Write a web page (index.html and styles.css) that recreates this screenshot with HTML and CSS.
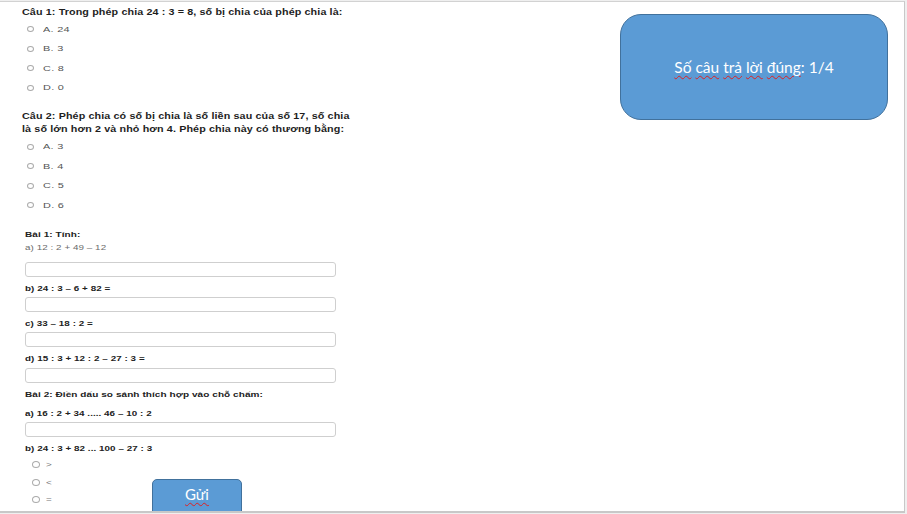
FILE: index.html
```html
<!DOCTYPE html>
<html lang="vi">
<head>
<meta charset="utf-8">
<title>Bài kiểm tra</title>
<link rel="stylesheet" href="styles.css">
</head>
<body>
<div class="panel">
  <main class="quiz">
    <section class="question">
      <p class="q-title">Câu 1: Trong phép chia 24 : 3 = 8, số bị chia của phép chia là:</p>
      <ul class="options">
        <li class="option"><span class="radio"></span><span class="opt-text">A. 24</span></li>
        <li class="option"><span class="radio"></span><span class="opt-text">B. 3</span></li>
        <li class="option"><span class="radio"></span><span class="opt-text">C. 8</span></li>
        <li class="option"><span class="radio"></span><span class="opt-text">D. 0</span></li>
      </ul>
    </section>
    <section class="question question-next">
      <p class="q-title">Câu 2: Phép chia có số bị chia là số liền sau của số 17, số chia<br>là số lớn hơn 2 và nhỏ hơn 4. Phép chia này có thương bằng:</p>
      <ul class="options">
        <li class="option"><span class="radio"></span><span class="opt-text">A. 3</span></li>
        <li class="option"><span class="radio"></span><span class="opt-text">B. 4</span></li>
        <li class="option"><span class="radio"></span><span class="opt-text">C. 5</span></li>
        <li class="option"><span class="radio"></span><span class="opt-text">D. 6</span></li>
      </ul>
    </section>
    <section class="exercise exercise-first">
      <p class="ex-title">Bài 1: Tính:</p>
      <p class="ex-sub">a) 12 : 2 + 49 – 12</p>
      <div class="answer answer-first"></div>
      <p class="ex-label">b) 24 : 3 – 6 + 82 =</p>
      <div class="answer"></div>
      <p class="ex-label">c) 33 – 18 : 2 =</p>
      <div class="answer"></div>
      <p class="ex-label">d) 15 : 3 + 12 : 2 – 27 : 3 =</p>
      <div class="answer answer-d"></div>
    </section>
    <section class="exercise">
      <p class="ex-title ex-title-gap">Bài 2: Điền dấu so sánh thích hợp vào chỗ chấm:</p>
      <p class="ex-label">a) 16 : 2 + 34 ..... 46 – 10 : 2</p>
      <div class="answer"></div>
      <p class="ex-label">b) 24 : 3 + 82 ... 100 – 27 : 3</p>
      <div class="bottom-row">
        <ul class="signs">
          <li class="sign"><span class="radio radio-lg"></span><span class="sign-text">&gt;</span></li>
          <li class="sign"><span class="radio radio-lg"></span><span class="sign-text">&lt;</span></li>
          <li class="sign"><span class="radio radio-lg"></span><span class="sign-text">=</span></li>
        </ul>
        <button class="submit" type="button"><span class="spell">Gửi</span></button>
      </div>
    </section>
  </main>
  <aside class="result">
    <div class="score-box"><span class="score-text"><span class="spell">Số</span> <span class="spell">câu</span> <span class="spell">trả</span> <span class="spell">lời</span> <span class="spell">đúng</span>: 1/4</span></div>
  </aside>
</div>
</body>
</html>
```
FILE: styles.css
```css
html, body {
  margin: 0;
  padding: 0;
}
body {
  background: #efefef;
  width: 907px;
  height: 514px;
  overflow: hidden;
  font-family: "Liberation Sans", Arial, sans-serif;
}
.panel {
  box-sizing: border-box;
  margin-top: 1px;
  width: 905px;
  height: 512px;
  background: #ffffff;
  border-top: 1px solid #d2d2d2;
  border-right: 1px solid #c8c8c8;
  border-bottom: 2px solid #c8c8c8;
  display: flex;
  overflow: hidden;
}
.quiz {
  flex: none;
  width: 400px;
  padding-top: 3.5px;
}
p, ul {
  margin: 0;
  padding: 0;
}
ul {
  list-style: none;
}
.question {
  padding-left: 22px;
}
.question-next {
  margin-top: 12px;
}
.q-title {
  font-weight: bold;
  font-size: 8.8px;
  line-height: 13px;
  letter-spacing: 0.1px;
  color: #1e1e1e;
  white-space: nowrap;
  transform: scaleX(1.22);
  transform-origin: left center;
}
.options {
  margin-top: 1.2px;
}
.option {
  height: 19.5px;
  display: flex;
  align-items: center;
  padding-left: 5px;
  font-size: 7.5px;
  color: #555555;
}
.opt-text {
  display: inline-block;
  letter-spacing: 0.2px;
  transform: scaleX(1.45);
  transform-origin: left center;
}
.radio {
  box-sizing: border-box;
  width: 7px;
  height: 6px;
  border: 1px solid #ababab;
  border-radius: 50%;
  margin-right: 9px;
  flex: none;
}
.radio-lg {
  width: 8px;
  height: 7px;
  margin-right: 6px;
}
.exercise {
  padding-left: 25px;
}
.exercise-first {
  margin-top: 13.3px;
}
.ex-title,
.ex-label,
.ex-sub {
  font-size: 7px;
  line-height: 13px;
  letter-spacing: 0.05px;
  white-space: nowrap;
  transform: scaleX(1.4);
  transform-origin: left center;
}
.ex-title {
  transform: scaleX(1.43);
}
.ex-title,
.ex-label {
  font-weight: bold;
  color: #222222;
}
.ex-sub {
  color: #6a6a6a;
}
.ex-title-gap {
  margin-bottom: 6px;
}
.answer {
  box-sizing: border-box;
  width: 311px;
  height: 15px;
  margin-top: 1.5px;
  margin-bottom: 5.5px;
  border: 1px solid #cfcfcf;
  border-radius: 3px;
  background: #ffffff;
}
.answer-first {
  margin-top: 7.5px;
}
.answer-d {
  margin-top: 2.5px;
}
.bottom-row {
  display: flex;
  align-items: flex-start;
  margin-top: 0.75px;
}
.signs {
  width: 127px;
  flex: none;
}
.sign {
  height: 17.5px;
  display: flex;
  align-items: center;
  padding-left: 7px;
  font-size: 7px;
  color: #777777;
}
.sign-text {
  display: inline-block;
  transform: scaleX(1.4);
  transform-origin: left center;
}
.submit {
  box-sizing: border-box;
  margin-top: 22.75px;
  width: 90px;
  height: 44px;
  padding: 4px 0 0;
  background: #5b9bd5;
  border: 1px solid #41719c;
  border-radius: 5px;
  color: #ffffff;
  font-family: Lato, "Open Sans", sans-serif;
  font-size: 15px;
  line-height: 20px;
  text-align: center;
  display: flex;
  justify-content: center;
  align-items: flex-start;
}
.spell {
  text-decoration: underline wavy #e02020;
  text-decoration-thickness: 1px;
  text-underline-offset: 2px;
}
.result {
  margin-left: auto;
  margin-right: 16px;
  padding-top: 12px;
}
.score-box {
  box-sizing: border-box;
  width: 268px;
  height: 106px;
  background: #5b9bd5;
  border: 1px solid #41719c;
  border-radius: 21px;
  color: #ffffff;
  font-family: Lato, "Open Sans", sans-serif;
  font-size: 15.5px;
  display: flex;
  align-items: center;
  justify-content: center;
}
.score-text {
  white-space: nowrap;
}
```
